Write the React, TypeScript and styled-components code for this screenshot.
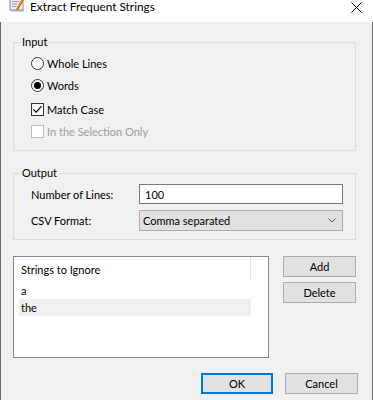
import React from "react";
import styled, { createGlobalStyle } from "styled-components";

const GlobalStyle = createGlobalStyle`
  html, body {
    margin: 0;
    padding: 0;
    background: #f0f0f0;
  }
  body {
    font-family: Lato, "Noto Sans", sans-serif;
    font-size: 11px;
    color: #000;
  }
`;

const Window = styled.div`
  width: 373px;
  height: 400px;
  display: flex;
  flex-direction: column;
  overflow: hidden;
`;

const TitleBar = styled.div`
  height: 22px;
  background: #fff;
  display: flex;
  align-items: flex-start;
  padding: 0 10px 0 9px;
  box-sizing: border-box;
`;

const TitleIcon = styled.svg`
  width: 17px;
  height: 14px;
  margin-top: -2px;
  flex: none;
`;

const TitleText = styled.span`
  margin-left: 4px;
  margin-top: 0;
  line-height: 14px;
  font-size: 11.8px;
  flex: 1;
`;

const CloseIcon = styled.svg`
  width: 11px;
  height: 11px;
  margin-top: 2px;
  margin-right: 1px;
`;

const Body = styled.div`
  flex: 1;
  border-left: 1px solid #6a6a6a;
  border-right: 1px solid #6a6a6a;
  padding: 12px 16px 0 12px;
  display: flex;
  flex-direction: column;
`;

const Group = styled.fieldset<{ $gap?: number }>`
  margin: ${(p) => p.$gap ?? 0}px 0 0 0;
  padding: 2px 12px 0 17px;
  border: 1px solid #dcdcdc;
  min-width: 0;
`;

const Legend = styled.legend`
  padding: 0 2px;
  margin-left: -11px;
  line-height: 16px;
`;

const OptionRow = styled.label<{ $disabled?: boolean; $top?: number }>`
  display: flex;
  align-items: center;
  height: 22px;
  margin-top: ${(p) => p.$top ?? 0}px;
  color: ${(p) => (p.$disabled ? "#a0a0a0" : "#000")};
`;

const Radio = styled.span<{ $checked?: boolean }>`
  width: 13px;
  height: 13px;
  box-sizing: border-box;
  border: 1px solid #333;
  border-radius: 50%;
  background: #fff;
  display: flex;
  align-items: center;
  justify-content: center;
  margin-right: 3px;
  &::after {
    content: "";
    width: 7px;
    height: 7px;
    border-radius: 50%;
    background: #000;
    display: ${(p) => (p.$checked ? "block" : "none")};
  }
`;

const Check = styled.span<{ $disabled?: boolean }>`
  width: 13px;
  height: 13px;
  box-sizing: border-box;
  border: 1px solid ${(p) => (p.$disabled ? "#bcbcbc" : "#333")};
  background: #fff;
  display: flex;
  align-items: center;
  justify-content: center;
  margin-right: 3px;
`;

const FieldRow = styled.div<{ $top?: number }>`
  display: grid;
  grid-template-columns: 108px 204px;
  align-items: center;
  margin-top: ${(p) => p.$top ?? 0}px;
`;

const TextBox = styled.div`
  height: 20px;
  box-sizing: border-box;
  border: 1px solid #7a7a7a;
  background: #fff;
  padding-left: 5px;
  display: flex;
  align-items: center;
`;

const Select = styled.div`
  height: 21px;
  box-sizing: border-box;
  border: 1px solid #adadad;
  background: #e1e1e1;
  padding: 0 6px 0 3px;
  display: flex;
  align-items: center;
  justify-content: space-between;
`;

const ListArea = styled.div`
  display: flex;
  margin-top: 16px;
  gap: 14px;
  align-items: flex-start;
`;

const ListBox = styled.div`
  width: 257px;
  height: 102px;
  box-sizing: border-box;
  border: 1px solid #828790;
  background: #fff;
  padding: 0 17px 0 5px;
`;

const ListHeader = styled.div`
  height: 24px;
  display: flex;
  align-items: center;
  padding-left: 2px;
  border-right: 1px solid #e5e5e5;
  margin-bottom: 1px;
`;

const ListItem = styled.div<{ $selected?: boolean }>`
  height: 17px;
  display: flex;
  align-items: center;
  padding-left: 2px;
  background: ${(p) => (p.$selected ? "#f0f0f0" : "transparent")};
`;

const SideButtons = styled.div`
  display: flex;
  flex-direction: column;
  gap: 5px;
`;

const Button = styled.div<{ $default?: boolean; $w?: number }>`
  width: ${(p) => p.$w ?? 73}px;
  height: 21px;
  box-sizing: border-box;
  border: ${(p) => (p.$default ? "2px solid #0078d7" : "1px solid #adadad")};
  background: #e1e1e1;
  display: flex;
  align-items: center;
  justify-content: center;
`;

const Footer = styled.div`
  display: flex;
  justify-content: flex-end;
  gap: 12px;
  margin-top: 15px;
  margin-right: -2px;
`;

const Spacer = styled.div<{ $h: number }>`
  height: ${(p) => p.$h}px;
`;

const CheckMark = () => (
  <svg width="11" height="11" viewBox="0 0 11 11">
    <path d="M1.5 5.5 L4.2 8.2 L9.5 2.2" fill="none" stroke="#000" strokeWidth="1.1" />
  </svg>
);

export default function App() {
  return (
    <Window>
      <GlobalStyle />
      <TitleBar>
        <TitleIcon viewBox="0 0 17 14">
          <rect x="1" y="-2" width="13" height="14" fill="#e8e8f8" stroke="#8a8ab0" />
          <rect x="2" y="12" width="13" height="1.5" fill="#b0b0b0" />
          <path d="M3 1 H10 M3 3.5 H10 M3 6 H8 M3 8.5 H7" stroke="#9a9ac8" strokeWidth="1" />
          <path d="M8 11 L14 1" stroke="#e8a020" strokeWidth="2.4" />
          <path d="M8.8 11.4 L14.6 1.6" stroke="#c04020" strokeWidth="0.8" />
          <path d="M7.3 12.2 L8 10.8 L8.8 11.3 Z" fill="#303030" />
        </TitleIcon>
        <TitleText>Extract Frequent Strings</TitleText>
        <CloseIcon viewBox="0 0 11 11">
          <path d="M0.5 0.5 L10.5 10.5 M10.5 0.5 L0.5 10.5" stroke="#000" strokeWidth="1" />
        </CloseIcon>
      </TitleBar>
      <Body>
        <Group>
          <Legend>Input</Legend>
          <OptionRow>
            <Radio />
            Whole Lines
          </OptionRow>
          <OptionRow>
            <Radio $checked />
            Words
          </OptionRow>
          <OptionRow $top={2}>
            <Check>
              <CheckMark />
            </Check>
            Match Case
          </OptionRow>
          <OptionRow $disabled>
            <Check $disabled />
            In the Selection Only
          </OptionRow>
          <Spacer $h={8} />
        </Group>
        <Group $gap={14}>
          <Legend>Output</Legend>
          <FieldRow $top={1}>
            <span>Number of Lines:</span>
            <TextBox>100</TextBox>
          </FieldRow>
          <FieldRow $top={6}>
            <span>CSV Format:</span>
            <Select>
              <span>Comma separated</span>
              <svg width="8" height="5" viewBox="0 0 8 5">
                <path d="M0.5 0.5 L4 4 L7.5 0.5" fill="none" stroke="#555" strokeWidth="1" />
              </svg>
            </Select>
          </FieldRow>
          <Spacer $h={8} />
        </Group>
        <ListArea>
          <ListBox>
            <ListHeader>Strings to Ignore</ListHeader>
            <ListItem>a</ListItem>
            <ListItem $selected>the</ListItem>
          </ListBox>
          <SideButtons>
            <Button>Add</Button>
            <Button>Delete</Button>
          </SideButtons>
        </ListArea>
        <Footer>
          <Button $default $w={72}>OK</Button>
          <Button>Cancel</Button>
        </Footer>
      </Body>
    </Window>
  );
}
